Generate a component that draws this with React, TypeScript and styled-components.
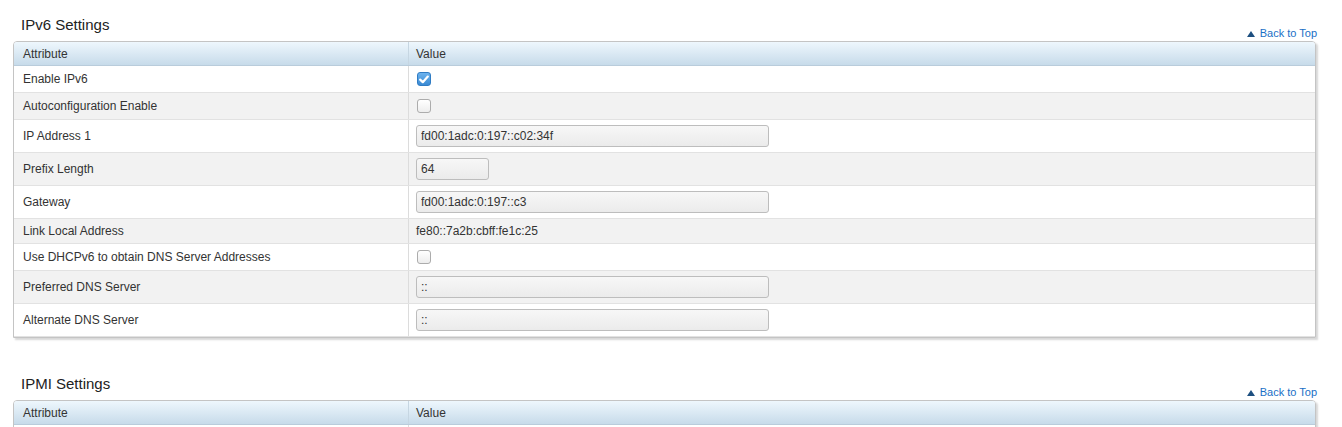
import React from 'react';
import styled, { createGlobalStyle } from 'styled-components';

const GlobalStyle = createGlobalStyle`
  body {
    margin: 0;
    background: #fff;
    font-family: 'Liberation Sans', Arial, sans-serif;
    color: #333;
  }
`;

const Page = styled.div`
  padding: 0 26px 0 13px;
  display: flex;
  flex-direction: column;
  gap: 21px;
`;

const Section = styled.section`
  display: flex;
  flex-direction: column;
`;

const SectionHead = styled.div`
  display: flex;
  justify-content: space-between;
  align-items: flex-end;
  height: 25px;
  padding: 16px 0 0 8px;
`;

const Title = styled.h2`
  margin: 0 0 7px;
  font-size: 15px;
  line-height: 18px;
  font-weight: normal;
  color: #222;
`;

const BackLink = styled.a`
  display: flex;
  align-items: center;
  gap: 5px;
  margin: 0 -1px 1px 0;
  font-size: 11px;
  line-height: 13px;
  color: #1a6fc6;
  text-decoration: none;
  cursor: pointer;
`;

const Arrow = styled.span`
  width: 0;
  height: 0;
  border-left: 4px solid transparent;
  border-right: 4px solid transparent;
  border-bottom: 6px solid #1d4f80;
`;

const Table = styled.div`
  border: 1px solid #c4c4c4;
  border-radius: 4px 4px 0 0;
  box-shadow: 2px 2px 2px rgba(0, 0, 0, 0.16);
  overflow: hidden;
`;

const Row = styled.div<{ $h: number; $alt?: boolean }>`
  display: grid;
  grid-template-columns: 395px 1fr;
  height: ${p => p.$h}px;
  background: ${p => (p.$alt ? '#f2f2f2' : '#fff')};
  border-bottom: 1px solid #e2e2e2;
  font-size: 12px;
  color: #333;
`;

const HeadRow = styled.div`
  display: grid;
  grid-template-columns: 395px 1fr;
  height: 23px;
  background: linear-gradient(#eef7fd, #c7dbea);
  border-bottom: 1px solid #b9ccdb;
  font-size: 12px;
  color: #333;
`;

const Cell = styled.div<{ $divider?: boolean }>`
  display: flex;
  align-items: center;
  padding-left: ${p => (p.$divider ? '9px' : '7px')};
  border-right: ${p => (p.$divider ? '1px solid #dcdcdc' : 'none')};
`;

const HeadCell = styled(Cell)`
  border-right: ${p => (p.$divider ? '1px solid #c6d6e2' : 'none')};
`;

const Box = styled.span<{ $on?: boolean }>`
  display: inline-flex;
  align-items: center;
  justify-content: center;
  width: 14px;
  height: 14px;
  margin-left: 1px;
  box-sizing: border-box;
  border-radius: 3px;
  border: 1px solid ${p => (p.$on ? '#2f7cc4' : '#acacac')};
  background: ${p =>
    p.$on ? 'linear-gradient(#6db3ee, #3a8ad3)' : 'linear-gradient(#ffffff, #ededed)'};
`;

const TextInput = styled.input<{ $w: number }>`
  box-sizing: border-box;
  width: ${p => p.$w}px;
  height: 22px;
  padding: 0 4px;
  border: 1px solid #bdbdbd;
  border-radius: 3px;
  background: linear-gradient(#f7f7f7, #ebebeb);
  font-family: 'Liberation Sans', Arial, sans-serif;
  font-size: 12px;
  color: #333;
  outline: none;
`;

const Check = ({ on }: { on?: boolean }) => (
  <Box $on={on}>
    {on && (
      <svg width="10" height="9" viewBox="0 0 10 9">
        <path d="M1.2 4.6 L3.8 7.2 L8.8 1.6" fill="none" stroke="#fff" strokeWidth="2.2" strokeLinecap="round" strokeLinejoin="round" />
      </svg>
    )}
  </Box>
);

type Item = {
  label: string;
  kind: 'check' | 'input' | 'text';
  on?: boolean;
  value?: string;
  w?: number;
};

const ipv6: Item[] = [
  { label: 'Enable IPv6', kind: 'check', on: true },
  { label: 'Autoconfiguration Enable', kind: 'check' },
  { label: 'IP Address 1', kind: 'input', value: 'fd00:1adc:0:197::c02:34f' },
  { label: 'Prefix Length', kind: 'input', value: '64', w: 73 },
  { label: 'Gateway', kind: 'input', value: 'fd00:1adc:0:197::c3' },
  { label: 'Link Local Address', kind: 'text', value: 'fe80::7a2b:cbff:fe1c:25' },
  { label: 'Use DHCPv6 to obtain DNS Server Addresses', kind: 'check' },
  { label: 'Preferred DNS Server', kind: 'input', value: '::' },
  { label: 'Alternate DNS Server', kind: 'input', value: '::' },
];

const ipmi: Item[] = [
  { label: 'Enable IPMI Over LAN', kind: 'check', on: true },
  { label: 'Channel Privilege Level Limit', kind: 'text', value: 'Administrator' },
  { label: 'Encryption Key', kind: 'input', value: '0000000000000000000000000000000000000000' },
];

const heights = { check: 26, input: 32, text: 24 };

const SettingsTable = ({ title, items }: { title: string; items: Item[] }) => (
  <Section>
    <SectionHead>
      <Title>{title}</Title>
      <BackLink>
        <Arrow />
        Back to Top
      </BackLink>
    </SectionHead>
    <Table>
      <HeadRow>
        <HeadCell $divider>Attribute</HeadCell>
        <HeadCell>Value</HeadCell>
      </HeadRow>
      {items.map((it, i) => (
        <Row key={it.label} $h={heights[it.kind]} $alt={i % 2 === 1}>
          <Cell $divider>{it.label}</Cell>
          <Cell>
            {it.kind === 'check' && <Check on={it.on} />}
            {it.kind === 'input' && <TextInput $w={it.w ?? 353} defaultValue={it.value} readOnly />}
            {it.kind === 'text' && it.value}
          </Cell>
        </Row>
      ))}
    </Table>
  </Section>
);

export default function App() {
  return (
    <>
      <GlobalStyle />
      <Page>
        <SettingsTable title="IPv6 Settings" items={ipv6} />
        <SettingsTable title="IPMI Settings" items={ipmi} />
      </Page>
    </>
  );
}
